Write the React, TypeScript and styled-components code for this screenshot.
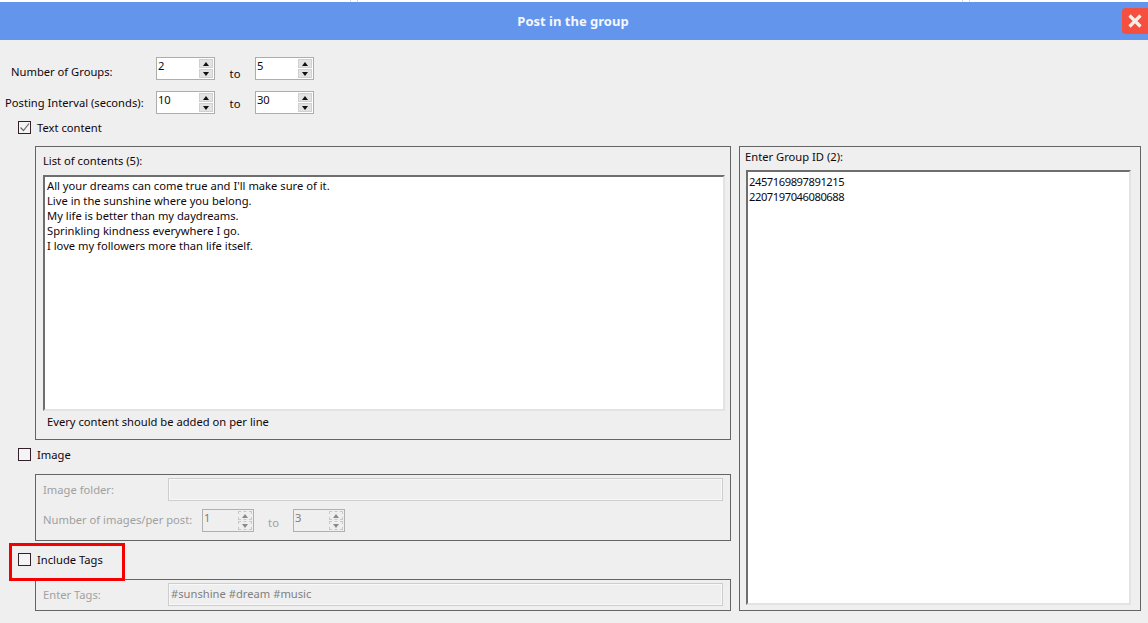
import React from "react";
import styled, { createGlobalStyle } from "styled-components";

const Global = createGlobalStyle`
  html, body { margin: 0; padding: 0; background: #fff; }
  body { font-family: "Noto Sans", "Liberation Sans", sans-serif; font-size: 11.2px; color: #10060c; }
  * { box-sizing: border-box; }
`;

const Page = styled.div`
  position: relative;
  width: 1148px;
  height: 623px;
  overflow: hidden;
  display: flex;
  flex-direction: column;
`;

const TopEdge = styled.div`
  height: 2px;
  flex: none;
  display: flex;
`;

const EdgeMark = styled.span<{ $gap: number; $width: number }>`
  margin-left: ${(p) => p.$gap}px;
  width: ${(p) => p.$width}px;
  flex: none;
  border-left: 1px solid #dcdcdc;
  border-right: 1px solid #dcdcdc;
`;

const TitleBar = styled.header`
  position: relative;
  height: 38px;
  flex: none;
  background: #6495ed;
  display: flex;
  align-items: center;
  justify-content: center;
  padding-right: 2px;
  color: #f4f7fc;
  font-weight: 700;
  font-size: 13px;
`;

const CloseButton = styled.div`
  position: absolute;
  right: 0;
  top: 6px;
  width: 26px;
  height: 26px;
  background: #f44f3f;
  border-radius: 4px 0 0 4px;
  display: flex;
  align-items: center;
  justify-content: center;
`;

const Body = styled.main`
  flex: 1;
  background: #efefef;
  display: flex;
  align-items: flex-start;
  gap: 8px;
`;

const LeftColumn = styled.div`
  width: 731px;
  flex: none;
  padding-top: 17px;
  display: flex;
  flex-direction: column;
`;

const FieldRow = styled.div<{ $gap?: number }>`
  display: flex;
  align-items: center;
  height: 23px;
  margin-bottom: ${(p) => p.$gap ?? 0}px;
`;

const FieldLabel = styled.div<{ $indent: number; $width: number; $drop?: number; $lift?: number }>`
  width: ${(p) => p.$width}px;
  padding-left: ${(p) => p.$indent}px;
  padding-top: ${(p) => (p.$drop ?? 0) * 2}px;
  padding-bottom: ${(p) => (p.$lift ?? 0) * 2}px;
  flex: none;
  white-space: nowrap;
`;

const ToLabel = styled.div<{ $disabled?: boolean; $drop?: number; $width?: number }>`
  width: ${(p) => p.$width ?? 40}px;
  flex: none;
  text-align: center;
  padding-top: ${(p) => (p.$drop ?? 0) * 2}px;
  color: ${(p) => (p.$disabled ? "#a0a0a0" : "inherit")};
`;

const Spinner = styled.div<{ $disabled?: boolean; $width: number }>`
  width: ${(p) => p.$width}px;
  height: 23px;
  flex: none;
  border: 1px solid ${(p) => (p.$disabled ? "#b0b0b0" : "#adadad")};
  background: ${(p) => (p.$disabled ? "#efefef" : "#fff")};
  color: ${(p) => (p.$disabled ? "#8a7a6a" : "inherit")};
  display: flex;
  justify-content: space-between;
  padding: 1px;
  line-height: 15px;
`;

const SpinnerValue = styled.span`
  letter-spacing: -0.2px;
  margin-top: -1px;
`;

const SpinnerButtons = styled.div`
  width: 14px;
  display: flex;
  flex-direction: column;
  gap: 1px;
`;

const SpinnerButton = styled.div<{ $down?: boolean; $disabled?: boolean }>`
  flex: 1;
  background: ${(p) => (p.$disabled ? "#efefef" : "#e3e3e3")};
  border: 1px ${(p) => (p.$disabled ? "dashed #c8c8c8" : "solid #d0d0d0")};
  display: flex;
  align-items: center;
  justify-content: center;
  &::after {
    content: "";
    border-left: 3.5px solid transparent;
    border-right: 3.5px solid transparent;
    ${(p) =>
      p.$down
        ? `border-top: 4px solid ${p.$disabled ? "#8a8a8a" : "#111"};`
        : `border-bottom: 4px solid ${p.$disabled ? "#8a8a8a" : "#111"};`}
  }
`;

const CheckRow = styled.div<{ $top: number; $bottom: number }>`
  display: flex;
  align-items: center;
  gap: 6px;
  height: 13px;
  margin: ${(p) => p.$top}px 0 ${(p) => p.$bottom}px 18px;
  white-space: nowrap;
`;

const CheckBox = styled.div`
  width: 13px;
  height: 13px;
  flex: none;
  border: 1px solid #33202a;
  background: #f4f4f4;
  display: flex;
  align-items: center;
  justify-content: center;
`;

const Group = styled.section<{ $height: number }>`
  margin-left: 35px;
  height: ${(p) => p.$height}px;
  border: 1px solid #646464;
  display: flex;
  flex-direction: column;
`;

const ContentsGroup = styled(Group)`
  padding: 5px 5px 0 7px;
`;

const GroupTitle = styled.div<{ $top?: number; $bottom: number }>`
  height: 18px;
  line-height: 18px;
  margin: ${(p) => p.$top ?? 0}px 0 ${(p) => p.$bottom}px;
  white-space: nowrap;
`;

const TextBox = styled.div<{ $padTop: number }>`
  flex: 1;
  background: #fff;
  border-style: solid;
  border-width: 2px;
  border-color: #6e6e6e #e3e3e3 #e3e3e3 #6e6e6e;
  padding: ${(p) => p.$padTop}px 2px 0;
  line-height: 15px;
  white-space: pre-line;
`;

const IdBox = styled(TextBox)`
  margin-left: 1px;
  padding-left: 1px;
  letter-spacing: -0.45px;
`;

const Hint = styled.div`
  height: 28px;
  line-height: 21px;
  padding-left: 4px;
`;

const ImageGroup = styled(Group)`
  padding: 3px 7px 0 7px;
  color: #a0a0a0;
`;

const DisabledRow = styled.div`
  display: flex;
  align-items: center;
  height: 23px;
  margin-bottom: 8px;
`;

const DisabledInput = styled.div`
  flex: 1;
  height: 23px;
  border: 1px solid #cdcdcd;
  box-shadow: inset 0 0 0 1px #f8f8f8;
  background: #efefef;
  padding: 2px;
  color: #7f7f7f;
  line-height: 16px;
`;

const RightPanel = styled.aside`
  margin-top: 106px;
  width: 402px;
  height: 465px;
  flex: none;
  border: 1px solid #646464;
  padding: 0 9px 5px 5px;
  display: flex;
  flex-direction: column;
`;

const Highlight = styled.div`
  position: absolute;
  left: 9px;
  top: 543px;
  width: 116px;
  height: 38px;
  border: 3px solid #f40000;
`;

const Spin = ({ value, width, disabled }: { value: string; width: number; disabled?: boolean }) => (
  <Spinner $width={width} $disabled={disabled}>
    <SpinnerValue>{value}</SpinnerValue>
    <SpinnerButtons>
      <SpinnerButton $disabled={disabled} />
      <SpinnerButton $down $disabled={disabled} />
    </SpinnerButtons>
  </Spinner>
);

const Tick = () => (
  <svg width="11" height="11" viewBox="0 0 11 11" fill="none">
    <path d="M1.5 5.5 L4.5 8.5 L10 1.5" stroke="#6a6a6a" strokeWidth="1.2" />
  </svg>
);

export default function App() {
  return (
    <Page>
      <Global />
      <TopEdge>
        <EdgeMark $gap={350} $width={8} />
        <EdgeMark $gap={604} $width={8} />
      </TopEdge>
      <TitleBar>
        Post in the group
        <CloseButton>
          <svg width="16" height="16" viewBox="0 0 16 16">
            <path d="M2.5 2.5 L13.5 13.5 M13.5 2.5 L2.5 13.5" stroke="#f6efe6" strokeWidth="3.2" />
          </svg>
        </CloseButton>
      </TitleBar>
      <Body>
        <LeftColumn>
          <FieldRow $gap={11}>
            <FieldLabel $indent={11} $width={156} $drop={2.5}>Number of Groups:</FieldLabel>
            <Spin value="2" width={59} />
            <ToLabel $drop={4.5}>to</ToLabel>
            <Spin value="5" width={59} />
          </FieldRow>
          <FieldRow>
            <FieldLabel $indent={5} $width={156}>Posting Interval (seconds):</FieldLabel>
            <Spin value="10" width={59} />
            <ToLabel $drop={0.5}>to</ToLabel>
            <Spin value="30" width={59} />
          </FieldRow>
          <CheckRow $top={7} $bottom={12}>
            <CheckBox><Tick /></CheckBox>
            Text content
          </CheckRow>
          <ContentsGroup $height={294}>
            <GroupTitle $bottom={5}>List of contents (5):</GroupTitle>
            <TextBox $padTop={1}>{`All your dreams can come true and I'll make sure of it.
Live in the sunshine where you belong.
My life is better than my daydreams.
Sprinkling kindness everywhere I go.
I love my followers more than life itself.`}</TextBox>
            <Hint>Every content should be added on per line</Hint>
          </ContentsGroup>
          <CheckRow $top={8} $bottom={13}>
            <CheckBox />
            Image
          </CheckRow>
          <ImageGroup $height={67}>
            <DisabledRow>
              <FieldLabel $indent={0} $width={125}>Image folder:</FieldLabel>
              <DisabledInput />
            </DisabledRow>
            <DisabledRow>
              <FieldLabel $indent={0} $width={159} $lift={1}>Number of images/per post:</FieldLabel>
              <Spin value="1" width={52} disabled />
              <ToLabel $disabled $drop={1.5} $width={39}>to</ToLabel>
              <Spin value="3" width={52} disabled />
            </DisabledRow>
          </ImageGroup>
          <CheckRow $top={12} $bottom={13}>
            <CheckBox />
            Include Tags
          </CheckRow>
          <ImageGroup $height={32}>
            <DisabledRow>
              <FieldLabel $indent={0} $width={125}>Enter Tags:</FieldLabel>
              <DisabledInput>#sunshine #dream #music</DisabledInput>
            </DisabledRow>
          </ImageGroup>
        </LeftColumn>
        <RightPanel>
          <GroupTitle $top={1} $bottom={4}>Enter Group ID (2):</GroupTitle>
          <IdBox $padTop={2}>{`2457169897891215
2207197046080688`}</IdBox>
        </RightPanel>
      </Body>
      <Highlight />
    </Page>
  );
}
